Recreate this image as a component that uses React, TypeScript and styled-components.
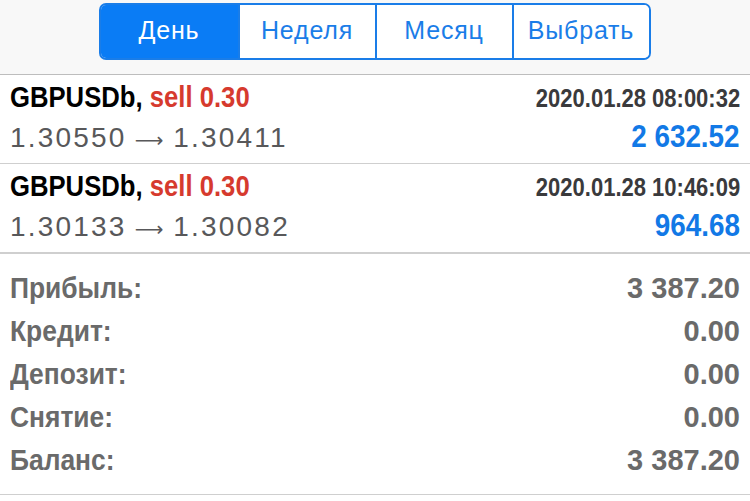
import styled, { createGlobalStyle } from 'styled-components';

const GlobalStyle = createGlobalStyle`
    html, body {
        margin: 0;
        padding: 0;
        background: #ffffff;
    }
    body {
        font-family: 'Liberation Sans', Arial, sans-serif;
    }
`;

interface Deal {
    symbol: string;
    type: string;
    volume: string;
    time: string;
    from: string;
    to: string;
    profit: string;
}

const deals: Deal[] = [
    {
        symbol: 'GBPUSDb',
        type: 'sell',
        volume: '0.30',
        time: '2020.01.28 08:00:32',
        from: '1.30550',
        to: '1.30411',
        profit: '2 632.52',
    },
    {
        symbol: 'GBPUSDb',
        type: 'sell',
        volume: '0.30',
        time: '2020.01.28 10:46:09',
        from: '1.30133',
        to: '1.30082',
        profit: '964.68',
    },
];

const summary: [string, string][] = [
    ['Прибыль:', '3 387.20'],
    ['Кредит:', '0.00'],
    ['Депозит:', '0.00'],
    ['Снятие:', '0.00'],
    ['Баланс:', '3 387.20'],
];

const tabs = ['День', 'Неделя', 'Месяц', 'Выбрать'];

const App = () => {
    return (
        <Page>
            <GlobalStyle />
            <Header>
                <Segmented>
                    {tabs.map((tab, i) => (
                        <Segment key={tab} $active={i === 0}>
                            {tab}
                        </Segment>
                    ))}
                </Segmented>
            </Header>
            {deals.map((deal) => (
                <DealRow key={deal.time}>
                    <Line>
                        <Title>
                            {deal.symbol},{' '}
                            <Sell>
                                {deal.type} {deal.volume}
                            </Sell>
                        </Title>
                        <Time>{deal.time}</Time>
                    </Line>
                    <Line>
                        <Prices>
                            {deal.from}
                            <Arrow>⟶</Arrow>
                            {deal.to}
                        </Prices>
                        <Profit>{deal.profit}</Profit>
                    </Line>
                </DealRow>
            ))}
            <Summary>
                {summary.map(([label, value]) => (
                    <SummaryRow key={label}>
                        <Label>{label}</Label>
                        <Value>{value}</Value>
                    </SummaryRow>
                ))}
            </Summary>
        </Page>
    );
};

const Page = styled.div`
    width: 750px;
    height: 501px;
    background: #ffffff;
    overflow: hidden;
`;

const Header = styled.div`
    height: 75px;
    background: #f8f8f8;
    border-bottom: 1px solid #bdbdbd;
    box-sizing: border-box;
    display: flex;
    justify-content: center;
    padding-top: 3px;
    padding-right: 1px;
`;

const Segmented = styled.div`
    display: grid;
    grid-template-columns: repeat(4, 137px);
    height: 57px;
    border: 2px solid #1a7de8;
    border-radius: 7px;
    overflow: hidden;
    box-sizing: border-box;
`;

const Segment = styled.div<{ $active?: boolean }>`
    display: flex;
    align-items: center;
    justify-content: center;
    font-size: 25px;
    letter-spacing: 0.8px;
    color: ${(p) => (p.$active ? '#ffffff' : '#1a7de8')};
    background: ${(p) => (p.$active ? '#0a7cf5' : '#ffffff')};
    & + & {
        border-left: 2px solid #1a7de8;
    }
    padding-bottom: 2px;
`;

const DealRow = styled.div`
    height: 89px;
    border-bottom: 1px solid #cfcfcf;
    box-sizing: border-box;
    padding: 6px 10px 0 10px;
    display: flex;
    flex-direction: column;
    gap: 4px;
`;

const Line = styled.div`
    display: flex;
    justify-content: space-between;
    align-items: baseline;
`;

/* the reference uses a condensed face; squeeze the bold text horizontally */
const Condensed = styled.span<{ $right?: boolean }>`
    display: inline-block;
    font-weight: bold;
    white-space: nowrap;
    transform-origin: ${(p) => (p.$right ? 'right' : 'left')} center;
`;

const Title = styled(Condensed)`
    font-size: 29px;
    color: #000000;
    transform: scaleX(0.885);
`;

const Sell = styled.span`
    color: #d63a2e;
`;

const Time = styled(Condensed).attrs({ $right: true })`
    font-size: 25px;
    color: #3a3a3c;
    transform: scaleX(0.88);
`;

const Prices = styled.span`
    font-size: 28px;
    letter-spacing: 2.2px;
    color: #58585a;
    white-space: nowrap;
`;

const Arrow = styled.span`
    display: inline-block;
    font-family: 'DejaVu Sans', sans-serif;
    font-size: 20px;
    letter-spacing: 0;
    margin: 0 10px 0 8px;
`;

const Profit = styled(Condensed).attrs({ $right: true })`
    font-size: 32px;
    color: #1279e6;
    transform: scaleX(0.87);
`;

const Summary = styled.div`
    border-top: 1px solid #cfcfcf;
    padding: 18px 10px 7px 10px;
    border-bottom: 1px solid #cfcfcf;
    display: flex;
    flex-direction: column;
`;

const SummaryRow = styled.div`
    display: flex;
    justify-content: space-between;
    align-items: baseline;
    height: 43px;
    font-size: 29px;
    color: #6a6a6a;
`;

const Label = styled(Condensed)`
    transform: scaleX(0.91);
`;

const Value = styled(Condensed).attrs({ $right: true })``;

export default App;
